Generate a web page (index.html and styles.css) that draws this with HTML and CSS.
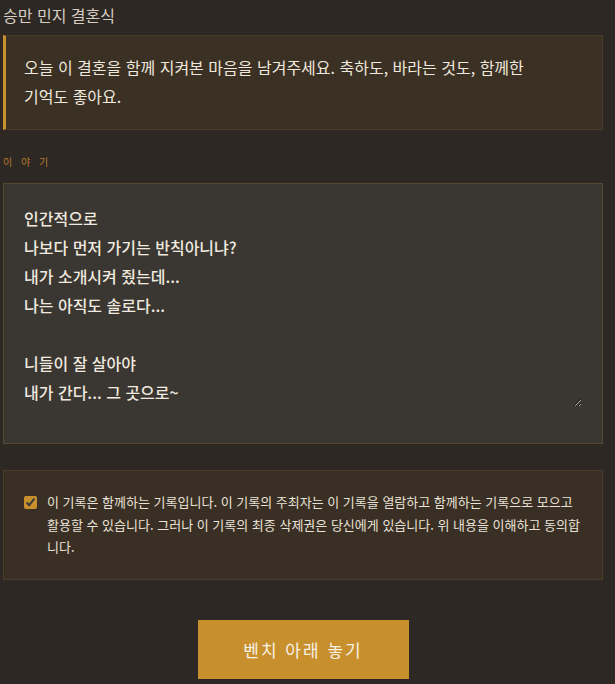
FILE: index.html
```html
<!DOCTYPE html>
<html lang="ko">
<head>
    <meta charset="UTF-8">
    <meta name="viewport" content="width=device-width, initial-scale=1.0">
    <title>승만 민지 결혼식</title>
    <link rel="stylesheet" href="styles.css">
</head>
<body>
    <div class="page">
        <h1 class="title">승만 민지 결혼식</h1>

        <div class="intro">
            <p>오늘 이 결혼을 함께 지켜본 마음을 남겨주세요. 축하도, 바라는 것도, 함께한 기억도 좋아요.</p>
        </div>

        <label class="field-label" for="story">이 야 기</label>
        <div class="story-box">
            <textarea id="story">인간적으로
나보다 먼저 가기는 반칙아니냐?
내가 소개시켜 줬는데...
나는 아직도 솔로다...

니들이 잘 살아야
내가 간다... 그 곳으로~</textarea>
        </div>

        <div class="agree-box">
            <label class="agree">
                <input type="checkbox" checked>
                <span>이 기록은 함께하는 기록입니다. 이 기록의 주최자는 이 기록을 열람하고 함께하는 기록으로 모으고 활용할 수 있습니다. 그러나 이 기록의 최종 삭제권은 당신에게 있습니다. 위 내용을 이해하고 동의합니다.</span>
            </label>
        </div>

        <div class="actions">
            <button class="submit-btn">벤치 아래 놓기</button>
        </div>
    </div>
</body>
</html>
```

FILE: styles.css
```css
body {
    margin: 0;
    background: #2d2824;
    font-family: "Noto Sans CJK KR", "Noto Sans", sans-serif;
    color: #e6dfd4;
}
.page {
    width: 600px;
    padding: 0 3px;
}
.title {
    margin: 0;
    padding-top: 3px;
    font-size: 16px;
    font-weight: 400;
    line-height: 24px;
    color: #d6cec2;
}
.intro {
    margin-top: 8px;
    background: #3b3024;
    border: 1px solid #4a3c28;
    border-left: 3px solid #c8902c;
    padding: 17px 18px 18px;
}
.intro p {
    margin: 0;
    max-width: 515px;
    font-size: 16px;
    line-height: 29px;
    color: #efe8dd;
}
.field-label {
    display: block;
    margin-top: 25px;
    font-size: 10px;
    line-height: 14px;
    letter-spacing: 3px;
    color: #b97c2c;
}
.story-box {
    margin-top: 14px;
    background: #3a3632;
    border: 1px solid #574832;
    padding: 20px 20px 36px;
}
.story-box textarea {
    display: block;
    width: 100%;
    height: 203px;
    box-sizing: border-box;
    margin: 0;
    padding: 0;
    border: none;
    outline: none;
    background: transparent;
    color: #efe9df;
    font-family: inherit;
    font-size: 16px;
    font-weight: 500;
    line-height: 29px;
    resize: vertical;
}
.agree-box {
    margin-top: 26px;
    background: #3a2f24;
    border: 1px solid #4a3c28;
    padding: 20px;
}
.agree {
    display: flex;
    align-items: flex-start;
    gap: 10px;
    font-size: 13px;
    line-height: 22.5px;
    color: #e9e2d7;
    word-break: break-all;
}
.agree input {
    flex-shrink: 0;
    width: 13px;
    height: 13px;
    margin: 5px 0 0 0;
    accent-color: #c8902c;
}
.actions {
    display: flex;
    justify-content: center;
    margin-top: 40px;
}
.submit-btn {
    width: 211px;
    height: 59px;
    background: #c8902c;
    color: #f7f1e7;
    border: none;
    font-family: inherit;
    font-size: 17px;
    letter-spacing: 2px;
    cursor: pointer;
}
```
